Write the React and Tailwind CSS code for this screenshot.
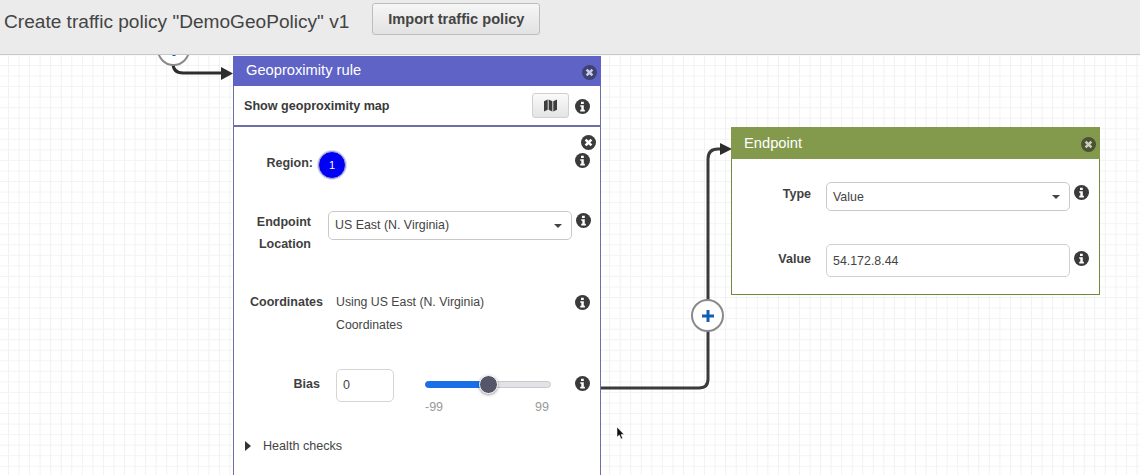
import React from 'react'

function InfoIcon({ className }) {
  return (
    <svg className={className} viewBox="0 0 14 14" width="15" height="15">
      <circle cx="7" cy="7" r="7" fill="#3a3a3a" />
      <path d="M5.6 2.500h2.600v2.100H5.600zM4.900 5.800h3.300v4.300h1v1.500H4.900v-1.500h1V7.300h-1z" fill="#fff" />
    </svg>
  )
}

function CloseIcon({ className, bg = '#3c3c3c', fg = '#fff' }) {
  return (
    <svg className={className} viewBox="0 0 14 14" width="15" height="15">
      <circle cx="7" cy="7" r="7" fill={bg} />
      <path d="M4.300 4.300l5.400 5.400M9.700 4.300l-5.400 5.400" stroke={fg} strokeWidth="2.400" />
    </svg>
  )
}

function Caret() {
  return <span className="w-0 h-0 border-x-[4px] border-x-transparent border-t-[4px] border-t-[#444]"></span>
}

function Label({ children, className = '' }) {
  return <div className={`font-bold text-[12.5px] leading-[22px] text-[#3f3f3f] text-right ${className}`}>{children}</div>
}

function Select({ value, className = '', textClass = '' }) {
  return (
    <div className={`h-[29px] flex items-center justify-between pl-[6px] pr-[9px] bg-white border border-[#c9c9c9] rounded-[5px] text-[12.4px] text-[#444] ${className}`}>
      <span className={textClass}>{value}</span>
      <Caret />
    </div>
  )
}

function AddCircle({ className }) {
  return (
    <div className={`absolute w-[33px] h-[33px] rounded-full bg-white border-2 border-[#8a8a8a] flex items-center justify-center ${className}`}>
      <svg viewBox="0 0 14 14" width="14" height="14">
        <path d="M7 1v12M1 7h12" stroke="#0f5fb3" strokeWidth="3" />
      </svg>
    </div>
  )
}

function GeoRule() {
  return (
    <div className="absolute left-[233px] top-[1px] w-[368px] h-[440px] bg-white border-x border-[#6f6fa8]">
      <div className="h-[30px] -mx-px bg-[#5f63c6] flex items-center justify-between pl-[13px] pr-[4px] text-white text-[14.700px]">
        <span className="-mt-[2px]">Geoproximity rule</span>
        <CloseIcon className="mt-[2px]" bg="#3f4270" fg="#c9cbe8" />
      </div>
      <div className="h-[41px] border-b-2 border-[#6f6fa8] flex items-center pl-[10px] pr-[10px]">
        <span className="font-bold text-[12.600px] text-[#3a3a3a] flex-1 mt-[2px]">Show geoproximity map</span>
        <div className="w-[37px] h-[25px] mr-[6px] flex items-center justify-center rounded-[3px] border border-[#d0d0d0] bg-gradient-to-b from-[#fafafa] to-[#e4e4e4]">
          <svg viewBox="0 0 14 13" width="13" height="13">
            <path d="M0 2l4-2v11l-4 2zM5 0l4 2v11l-4-2zM10 2l4-2v11l-4 2z" fill="#3d3d3d" />
          </svg>
        </div>
        <InfoIcon className="mt-[2px]" />
      </div>
      <div className="relative">
        <CloseIcon className="absolute right-[4px] top-[8px]" />
        <div className="flex items-start pt-[22px] h-[84px]">
          <Label className="w-[79px] leading-[26px] mt-[1px]">Region:</Label>
          <div className="ml-[5px] mt-[2px] w-[28px] h-[28px] rounded-full bg-[#0000f5] border border-[#a9a9d0] shadow-[0_0_0_1px_#dcdcea] flex items-center justify-center text-white text-[11px]">1</div>
          <InfoIcon className="ml-auto mr-[10px] mt-[4px]" />
        </div>
        <div className="flex items-start h-[79px]">
          <Label className="w-[77px] text-center">Endpoint<br />Location</Label>
          <Select value="US East (N. Virginia)" className="ml-[17px] w-[244px]" />
          <InfoIcon className="ml-[4px] mt-[2px]" />
        </div>
        <div className="flex items-start h-[79px] pt-[1px]">
          <Label className="w-[89px]">Coordinates</Label>
          <div className="ml-[13px] w-[200px] text-[12.300px] leading-[23px] text-[#444]">Using US East (N. Virginia)<br />Coordinates</div>
          <InfoIcon className="ml-auto mr-[10px] mt-[4px]" />
        </div>
        <div className="flex items-start h-[68px]">
          <Label className="w-[86px] mt-[4px]">Bias</Label>
          <div className="ml-[16px] w-[58px] h-[33px] pl-[6px] flex items-center border border-[#d5d5d5] rounded-[5px] text-[12.500px] text-[#444]">0</div>
          <div className="ml-[31px] w-[126px] mt-[12px]">
            <div className="relative h-[7px] rounded-full bg-[#e3e3e6] border border-[#c9c9cf]">
              <div className="w-[63px] h-full -mt-px -ml-px box-content border border-[#1a6fe8] bg-[#1a6fe8] rounded-l-full"></div>
              <div className="absolute left-[53px] top-[-7px] w-[19px] h-[19px] rounded-full bg-[#55566a] border border-white shadow-[0_1px_3px_rgba(0,0,0,0.4)]"></div>
            </div>
            <div className="flex justify-between mt-[10px] pr-[2px] text-[12.500px] text-[#999]">
              <span>-99</span>
              <span>99</span>
            </div>
          </div>
          <InfoIcon className="ml-auto mr-[10px] mt-[7px]" />
        </div>
        <div className="flex items-center pl-[11px] text-[12.600px] text-[#444]">
          <span className="w-0 h-0 border-y-[5px] border-y-transparent border-l-[6px] border-l-[#333] mr-[12px]"></span>
          Health checks
        </div>
      </div>
    </div>
  )
}

function Endpoint() {
  return (
    <div className="absolute left-[731px] top-[72px] w-[369px] h-[168px] bg-white border border-[#6f8a3a]">
      <div className="h-[32px] -mx-px -mt-px bg-[#83994b] flex items-center justify-between pl-[13px] pr-[4px] text-white text-[14.700px]">
        <span>Endpoint</span>
        <CloseIcon className="mt-[3px]" bg="#4a5136" fg="#c9cfb5" />
      </div>
      <div className="flex items-start mt-[23px]">
        <Label className="w-[79px] mt-[1px]">Type</Label>
        <Select value="Value" className="ml-[15px] w-[244px]" textClass="mt-[2px]" />
        <InfoIcon className="ml-[4px] mt-[3px]" />
      </div>
      <div className="flex items-start mt-[33px]">
        <Label className="w-[79px] mt-[4px]">Value</Label>
        <div className="ml-[15px] w-[244px] h-[33px] flex items-center pl-[6px] border border-[#d0d0d0] rounded-[5px] text-[12.400px] text-[#444]">
          <span className="mt-[2px]">54.172.8.44</span>
        </div>
        <InfoIcon className="ml-[4px] mt-[7px]" />
      </div>
    </div>
  )
}

export default function App() {
  return (
    <div className="w-[1140px] h-[475px] overflow-hidden flex flex-col bg-white font-['Liberation_Sans',Arial,sans-serif]">
      <div className="h-[55px] shrink-0 flex items-start bg-[#ebebeb] border-b border-[#c8c8c8]">
        <h1 className="ml-[4px] mt-[9px] text-[19.100px] leading-[26px] text-[#444]">Create traffic policy "DemoGeoPolicy" v1</h1>
        <button className="ml-[23px] mt-[3px] w-[168px] h-[32px] pt-[2px] rounded-[3px] border border-[#bdbdbd] bg-gradient-to-b from-[#f6f6f6] to-[#e2e2e2] font-bold text-[14.600px] text-[#444]">Import traffic policy</button>
      </div>
      <div className="relative flex-1 overflow-hidden bg-[linear-gradient(#f3f3f3_1px,transparent_1px),linear-gradient(90deg,#f1f1f1_1px,transparent_1px)] bg-[size:10.550px_10.550px] bg-[position:8px_10px]">
        <svg className="absolute left-0 top-0" width="1140" height="420" viewBox="0 0 1140 420" fill="none">
          <path d="M173 8q0 10 10 10h44" stroke="#2d2d2d" strokeWidth="3" />
          <path d="M221 12l12 6.500-12 6.500z" fill="#2d2d2d" />
          <path d="M601 333h98q9 0 9-9V104q0-10 10-10h6" stroke="#3a3a3a" strokeWidth="3" />
          <path d="M720 88l12 6-12 6z" fill="#2d2d2d" />
        </svg>
        <AddCircle className="left-[157px] top-[-22px]" />
        <AddCircle className="left-[691px] top-[244px]" />
        <GeoRule />
        <Endpoint />
        <svg className="absolute left-[616px] top-[372px]" width="9" height="13" viewBox="0 0 9 13">
          <path d="M1 0v10l2.400-2 1.600 4 1.600-.7-1.600-3.800h3z" fill="#111" stroke="#fff" strokeWidth=".5" />
        </svg>
      </div>
    </div>
  )
}
